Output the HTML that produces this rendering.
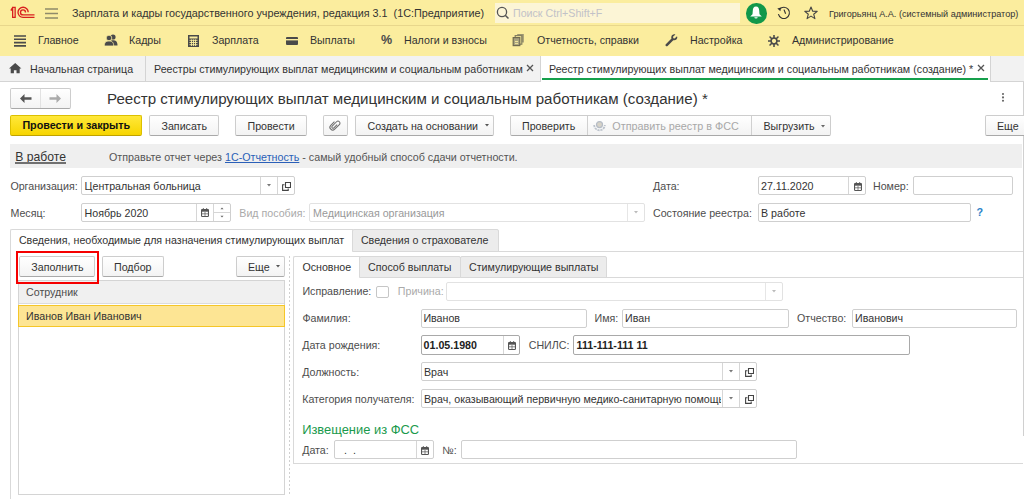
<!DOCTYPE html><html><head><meta charset="utf-8"><style>
html,body{margin:0;padding:0;width:1024px;height:499px;overflow:hidden;background:#fff;position:relative;font-family:"Liberation Sans",sans-serif}
div{position:absolute;box-sizing:border-box}
svg{display:block}
.t{white-space:nowrap;line-height:normal}
</style></head><body>
<div style="left:0px;top:0px;width:1024px;height:25px;background:#fbed9e"></div>
<div style="left:0px;top:25px;width:1024px;height:1px;background:#e8d78c"></div>
<div style="left:0px;top:26px;width:1024px;height:30px;background:#fbed9e"></div>
<svg style="position:absolute;left:0px;top:0px;" width="40" height="23" viewBox="0 0 40 23"><path d="M12.65 17.35V7.45H15.15V17.35ZM12.65 7.5L11.25 9.6V10.1H12.65" fill="none" stroke="#d9201f" stroke-width="1.3" stroke-linejoin="miter"/><path d="M28.2 12.3A5.1 5.1 0 1 0 23 17.4H34.5" fill="none" stroke="#d9201f" stroke-width="1.35"/><path d="M25.5 12.4A2.5 2.5 0 1 0 23 14.9H34.5" fill="none" stroke="#d9201f" stroke-width="1.35"/></svg>
<svg style="position:absolute;left:45px;top:8px;" width="13" height="11" viewBox="0 0 13 11"><path d="M0 1H13M0 5.5H13M0 10H13" stroke="#8f8a6a" stroke-width="1.4"/></svg>
<div class="t" style="left:72px;top:7.23px;font-size:10.8px;color:#333;font-weight:normal;">Зарплата и кадры государственного учреждения, редакция 3.1&nbsp; (1С:Предприятие)</div>
<div style="left:495px;top:3px;width:245px;height:20px;background:#fcf5d6"></div>
<svg style="position:absolute;left:496px;top:6px;" width="14" height="14" viewBox="0 0 14 14"><circle cx="6" cy="6" r="4.6" fill="none" stroke="#555" stroke-width="1.3"/><path d="M9.2 9.2L12.5 12.5" stroke="#555" stroke-width="1.5"/></svg>
<div class="t" style="left:513px;top:7.34px;font-size:10.67px;color:#c2c2c8;font-weight:normal;">Поиск Ctrl+Shift+F</div>
<div style="left:746px;top:3px;width:20.5px;height:20.5px;background:#11984a;border-radius:50%"></div>
<svg style="position:absolute;left:749px;top:5px;" width="14" height="16" viewBox="0 0 14 16"><path d="M7 1.5C4.6 1.5 3.9 3.6 3.8 5.6L3.5 9.2L1.2 11.4H12.8L10.5 9.2L10.2 5.6C10.1 3.6 9.4 1.5 7 1.5Z" fill="#fff"/><path d="M5.3 12.2H8.7A1.7 1.4 0 0 1 5.3 12.2Z" fill="#fff"/></svg>
<svg style="position:absolute;left:776px;top:5px;" width="16" height="15" viewBox="0 0 16 15"><path d="M3.6 4.2A5.6 5.6 0 1 1 2.4 9.2" fill="none" stroke="#333" stroke-width="1.15"/><path d="M1.3 3.6L4.9 2.6L4.4 6.2Z" fill="#333"/><path d="M8 4.6L9.6 8.8" fill="none" stroke="#333" stroke-width="1.15"/></svg>
<svg style="position:absolute;left:804px;top:6px;" width="14" height="14" viewBox="0 0 14 14"><path d="M7 1L8.7 5.2L13.2 5.4L9.7 8.2L10.9 12.6L7 10.1L3.1 12.6L4.3 8.2L0.8 5.4L5.3 5.2Z" fill="none" stroke="#444" stroke-width="1.1" stroke-linejoin="round"/></svg>
<div class="t" style="left:829px;top:8.76px;font-size:9.1px;color:#333;font-weight:normal;">Григорьянц А.А. (системный администратор)</div>
<div class="t" style="left:38px;top:34.34px;font-size:10.67px;color:#333;font-weight:normal;">Главное</div>
<div class="t" style="left:129px;top:34.34px;font-size:10.67px;color:#333;font-weight:normal;">Кадры</div>
<div class="t" style="left:212px;top:34.34px;font-size:10.67px;color:#333;font-weight:normal;">Зарплата</div>
<div class="t" style="left:310px;top:34.34px;font-size:10.67px;color:#333;font-weight:normal;">Выплаты</div>
<div class="t" style="left:404px;top:34.34px;font-size:10.67px;color:#333;font-weight:normal;">Налоги и взносы</div>
<div class="t" style="left:537px;top:34.34px;font-size:10.67px;color:#333;font-weight:normal;">Отчетность, справки</div>
<div class="t" style="left:690px;top:34.34px;font-size:10.67px;color:#333;font-weight:normal;">Настройка</div>
<div class="t" style="left:792px;top:34.34px;font-size:10.67px;color:#333;font-weight:normal;">Администрирование</div>
<svg style="position:absolute;left:14px;top:35px;" width="12" height="12" viewBox="0 0 12 12"><path d="M0 1H12M0 4.3H12M0 7.6H12M0 10.9H12" stroke="#4a4a4a" stroke-width="1.6"/></svg>
<svg style="position:absolute;left:104px;top:34px;" width="14" height="12" viewBox="0 0 14 12"><circle cx="9" cy="3" r="2.6" fill="#4a4a4a"/><path d="M5 11.5C5 7.5 6.5 6.3 9 6.3S13.5 7.5 13.5 11.5Z" fill="#4a4a4a"/><circle cx="5" cy="4" r="2.8" fill="#4a4a4a" stroke="#fbed9e" stroke-width="0.8"/><path d="M0.3 12C0.3 8.3 2 7 5 7S9.7 8.3 9.7 12Z" fill="#4a4a4a" stroke="#fbed9e" stroke-width="0.8"/></svg>
<svg style="position:absolute;left:188px;top:35px;" width="11" height="12" viewBox="0 0 11 12"><rect x="0" y="0" width="11" height="12" fill="#4a4a4a"/><rect x="1.5" y="1.5" width="8" height="2" fill="#fbed9e"/><path d="M1.5 5.3H9.5M1.5 7.5H9.5M1.5 9.7H9.5" stroke="#fbed9e" stroke-width="0.9"/><path d="M3.5 4.5V11M5.5 4.5V11M7.5 4.5V11" stroke="#fbed9e" stroke-width="0.9"/></svg>
<svg style="position:absolute;left:286px;top:37px;" width="12" height="8" viewBox="0 0 12 8"><rect x="0" y="0" width="12" height="8" rx="1" fill="#4a4a4a"/><rect x="0" y="2" width="12" height="1.4" fill="#fbed9e"/></svg>
<div class="t" style="left:381px;top:33.19px;font-size:12.5px;color:#4a4a4a;font-weight:bold;">%</div>
<svg style="position:absolute;left:512px;top:33px;" width="13" height="14" viewBox="0 0 13 14"><rect x="5.2" y="1" width="6.6" height="8.5" fill="#9b9570"/><rect x="3.2" y="2.6" width="6.6" height="8.6" fill="#fbed9e" stroke="#858060" stroke-width="1.2"/><rect x="1.2" y="4.6" width="6.6" height="8" fill="#a9a380" stroke="#6f6a50" stroke-width="1.2"/><path d="M3 8.5H6M3 10.6H6" stroke="#fbed9e" stroke-width="0.9"/></svg>
<svg style="position:absolute;left:665px;top:34px;" width="13" height="13" viewBox="0 0 13 13"><path d="M12 2.3L9.6 4.6L8.3 4.2L8 2.8L10.4 0.5C8.6 -0.2 6.5 0.9 6.3 3C6.2 3.6 6.3 4 6.5 4.5L0.8 10.2C0.2 10.8 0.4 11.9 1.2 12.2C1.7 12.4 2.2 12.2 2.6 11.9L8.3 6.2C10.6 7 13.2 4.9 12 2.3Z" fill="#4a4a4a"/></svg>
<svg style="position:absolute;left:768.4px;top:34.5px;" width="12" height="12" viewBox="0 0 12 12"><circle cx="6" cy="6" r="2.9" fill="none" stroke="#4a4a4a" stroke-width="1.5"/><path d="M9.20 6.00L11.60 6.00M8.26 8.26L9.96 9.96M6.00 9.20L6.00 11.60M3.74 8.26L2.04 9.96M2.80 6.00L0.40 6.00M3.74 3.74L2.04 2.04M6.00 2.80L6.00 0.40M8.26 3.74L9.96 2.04" stroke="#4a4a4a" stroke-width="1.6" stroke-linecap="round"/></svg>
<div style="left:0px;top:56px;width:1024px;height:25px;background:#f2f2f2"></div>
<div style="left:0px;top:81px;width:1024px;height:1px;background:#d4d4d4"></div>
<svg style="position:absolute;left:9px;top:62.6px;" width="13" height="11" viewBox="0 0 13 11"><path d="M6.2 0L12.4 5.6H10.7V10.3H7.5V7.2H4.9V10.3H1.7V5.6H0Z" fill="#4a4a4a"/></svg>
<div class="t" style="left:30px;top:62.84px;font-size:10.67px;color:#333;font-weight:normal;">Начальная страница</div>
<div style="left:145px;top:56px;width:1px;height:25px;background:#d4d4d4"></div>
<div class="t" style="left:154px;top:62.84px;font-size:10.67px;color:#333;font-weight:normal;">Реестры стимулирующих выплат медицинским и социальным работникам</div>
<svg style="position:absolute;left:526px;top:64px;" width="8" height="8" viewBox="0 0 8 8"><path d="M1 1L7 7M7 1L1 7" stroke="#555" stroke-width="1.3"/></svg>
<div style="left:540px;top:56px;width:1px;height:25px;background:#d4d4d4"></div>
<div style="left:541px;top:56px;width:449px;height:26px;background:#fff"></div>
<div class="t" style="left:549px;top:62.84px;font-size:10.67px;color:#333;font-weight:normal;">Реестр стимулирующих выплат медицинским и социальным работникам (создание) *</div>
<svg style="position:absolute;left:977px;top:64px;" width="8" height="8" viewBox="0 0 8 8"><path d="M1 1L7 7M7 1L1 7" stroke="#555" stroke-width="1.3"/></svg>
<div style="left:542px;top:78px;width:446px;height:2px;background:#16a04c"></div>
<div style="left:990px;top:56px;width:1px;height:25px;background:#d4d4d4"></div>
<div style="left:1023px;top:82px;width:1px;height:354px;background:#d0d0d0"></div>
<div style="left:10px;top:88px;width:61px;height:21px;background:linear-gradient(#ffffff,#f3f3f3);border:1px solid #cdcdcd;border-bottom-color:#a9a9a9;border-radius:2px;"></div>
<div style="left:40px;top:89px;width:1px;height:19px;background:#e2e2e2"></div>
<svg style="position:absolute;left:20px;top:94px;" width="12" height="9" viewBox="0 0 12 9"><path d="M0 4.5L4.5 0V3.2H11.5V5.8H4.5V9Z" fill="#555"/></svg>
<svg style="position:absolute;left:49px;top:94px;" width="12" height="9" viewBox="0 0 12 9"><path d="M12 4.5L7.5 0V3.2H0.5V5.8H7.5V9Z" fill="#aaa"/></svg>
<div class="t" style="left:107px;top:89.73px;font-size:15.1px;color:#333;font-weight:normal;">Реестр стимулирующих выплат медицинским и социальным работникам (создание) *</div>
<svg style="position:absolute;left:1001px;top:92.3px;" width="4" height="13" viewBox="0 0 4 13"><circle cx="2" cy="2" r="1.05" fill="#666"/><circle cx="2" cy="5.4" r="1.05" fill="#666"/><circle cx="2" cy="8.8" r="1.05" fill="#666"/></svg>
<div style="left:10px;top:115px;width:132px;height:21px;background:linear-gradient(#ffe83a,#f7d500);border:1px solid #dcc000;border-bottom-color:#bfa200;border-radius:2px;"></div>
<div class="t" style="left:22.4px;top:119.07px;font-size:10.75px;color:#111;font-weight:bold;">Провести и закрыть</div>
<div style="left:149px;top:115px;width:70px;height:21px;background:linear-gradient(#ffffff,#f3f3f3);border:1px solid #cdcdcd;border-bottom-color:#a9a9a9;border-radius:2px;"></div>
<div class="t" style="left:161.5px;top:119.84px;font-size:10.67px;color:#333;font-weight:normal;">Записать</div>
<div style="left:235px;top:115px;width:72px;height:21px;background:linear-gradient(#ffffff,#f3f3f3);border:1px solid #cdcdcd;border-bottom-color:#a9a9a9;border-radius:2px;"></div>
<div class="t" style="left:247.5px;top:119.84px;font-size:10.67px;color:#333;font-weight:normal;">Провести</div>
<div style="left:323px;top:115px;width:25px;height:21px;background:linear-gradient(#ffffff,#f3f3f3);border:1px solid #cdcdcd;border-bottom-color:#a9a9a9;border-radius:2px;"></div>
<svg style="position:absolute;left:328px;top:118px;" width="14" height="14" viewBox="0 0 14 14"><g transform="rotate(45 7 7)"><path d="M4.2 5V10.2A2.8 2.8 0 0 0 9.8 10.2V3.6A2 2 0 0 0 5.8 3.6V9.8A1.2 1.2 0 0 0 8.2 9.8V5.2" fill="none" stroke="#6f6f6f" stroke-width="1.05"/></g></svg>
<div style="left:355px;top:115px;width:139px;height:21px;background:linear-gradient(#ffffff,#f3f3f3);border:1px solid #cdcdcd;border-bottom-color:#a9a9a9;border-radius:2px;"></div>
<div class="t" style="left:367.5px;top:119.84px;font-size:10.67px;color:#333;font-weight:normal;">Создать на основании</div>
<svg style="position:absolute;left:484.5px;top:124.3px;" width="4" height="3" viewBox="0 0 4 3"><path d="M0 0H4L2 2.4Z" fill="#555"/></svg>
<div style="left:510px;top:115px;width:321px;height:21px;background:linear-gradient(#ffffff,#f3f3f3);border:1px solid #cdcdcd;border-bottom-color:#a9a9a9;border-radius:2px;"></div>
<div style="left:587px;top:116px;width:1px;height:19px;background:#d0d0d0"></div>
<div style="left:751px;top:116px;width:1px;height:19px;background:#d0d0d0"></div>
<div class="t" style="left:522px;top:119.84px;font-size:10.67px;color:#333;font-weight:normal;">Проверить</div>
<svg style="position:absolute;left:593px;top:120px;" width="13" height="12" viewBox="0 0 13 12"><path d="M1.2 5A5.3 5.3 0 0 0 11.8 5" fill="none" stroke="#bcc3cc" stroke-width="1.8" stroke-dasharray="2.2 0.8"/><circle cx="6.5" cy="4.6" r="3" fill="#d7d3c8" stroke="#b5bcc6" stroke-width="1.2"/></svg>
<div class="t" style="left:612.3px;top:119.73px;font-size:10.8px;color:#a8a8a8;font-weight:normal;">Отправить реестр в ФСС</div>
<div class="t" style="left:763.5px;top:119.84px;font-size:10.67px;color:#333;font-weight:normal;">Выгрузить</div>
<svg style="position:absolute;left:821px;top:125.3px;" width="4" height="3" viewBox="0 0 4 3"><path d="M0 0H4L2 2.4Z" fill="#666"/></svg>
<div style="left:985px;top:115px;width:45px;height:21px;background:linear-gradient(#ffffff,#f3f3f3);border:1px solid #cdcdcd;border-bottom-color:#a9a9a9;border-radius:2px;"></div>
<div class="t" style="left:997px;top:119.84px;font-size:10.67px;color:#333;font-weight:normal;">Еще</div>
<div style="left:10px;top:144px;width:1012px;height:24px;background:#efefef"></div>
<div class="t" style="left:15.3px;top:149.86px;font-size:12.2px;color:#333;font-weight:normal;">В работе</div>
<div style="left:15px;top:162px;width:51px;height:2px;background:#707070"></div>
<div class="t" style="left:109px;top:150.59px;font-size:10.73px;color:#555;font-weight:normal;">Отправьте отчет через <span style="color:#2a5fb8;text-decoration:underline">1С-Отчетность</span> - самый удобный способ сдачи отчетности.</div>
<div class="t" style="left:10.4px;top:180.34px;font-size:10.67px;color:#4d4d4d;font-weight:normal;">Организация:</div>
<div style="left:81px;top:176px;width:214px;height:19px;background:#fff;border:1px solid #cfcfcf;border-radius:2px;"></div>
<div style="left:260px;top:177px;width:1px;height:17px;background:#d6d6d6"></div>
<div style="left:277px;top:177px;width:1px;height:17px;background:#d6d6d6"></div>
<div class="t" style="left:84.6px;top:180.34px;font-size:10.67px;color:#333;font-weight:normal;">Центральная больница</div>
<svg style="position:absolute;left:266.5px;top:184.3px;" width="4" height="3" viewBox="0 0 4 3"><path d="M0 0H4L2 2.4Z" fill="#777"/></svg>
<svg style="position:absolute;left:282px;top:182px;" width="9" height="9" viewBox="0 0 9 9"><path d="M3.5 0.5H8.5V5.5H3.5Z" fill="none" stroke="#444" stroke-width="1.1"/><path d="M2.5 2.8H0.6V8.4H6.2V6.5" fill="none" stroke="#444" stroke-width="1.1"/></svg>
<div class="t" style="left:10.4px;top:206.84px;font-size:10.67px;color:#4d4d4d;font-weight:normal;">Месяц:</div>
<div style="left:81px;top:203px;width:150px;height:19px;background:#fff;border:1px solid #cfcfcf;border-radius:2px;"></div>
<div style="left:196px;top:204px;width:1px;height:17px;background:#d6d6d6"></div>
<div style="left:213px;top:204px;width:1px;height:17px;background:#d6d6d6"></div>
<div class="t" style="left:84.6px;top:206.84px;font-size:10.67px;color:#333;font-weight:normal;">Ноябрь 2020</div>
<svg style="position:absolute;left:201px;top:207.5px;" width="8" height="9" viewBox="0 0 8 9"><rect x="0.55" y="1.55" width="6.9" height="6.9" rx="0.8" fill="none" stroke="#555" stroke-width="1.1"/><rect x="0.5" y="1.5" width="7" height="2.2" fill="#555"/><rect x="1.8" y="0.3" width="1.2" height="1.8" fill="#555"/><rect x="5" y="0.3" width="1.2" height="1.8" fill="#555"/><path d="M1 5.8H7M4 4V8" stroke="#555" stroke-width="0.7"/></svg>
<svg style="position:absolute;left:220px;top:206px;" width="4" height="13" viewBox="0 0 4 13"><path d="M0.5 3.3H3.5L2 1.5Z" fill="#666"/><path d="M0.5 9.7H3.5L2 11.5Z" fill="#666"/></svg>
<div style="left:214px;top:212px;width:16px;height:1px;background:#d6d6d6"></div>
<div class="t" style="left:239.3px;top:206.84px;font-size:10.67px;color:#aaa;font-weight:normal;">Вид пособия:</div>
<div style="left:309px;top:203px;width:336px;height:19px;background:#fff;border:1px solid #cfcfcf;border-radius:2px;border-color:#e2e2e2"></div>
<div style="left:627px;top:204px;width:1px;height:17px;background:#e6e6e6"></div>
<div class="t" style="left:313px;top:206.84px;font-size:10.67px;color:#999;font-weight:normal;">Медицинская организация</div>
<svg style="position:absolute;left:634px;top:211.3px;" width="4" height="3" viewBox="0 0 4 3"><path d="M0 0H4L2 2.4Z" fill="#bbb"/></svg>
<div class="t" style="left:653px;top:180.34px;font-size:10.67px;color:#4d4d4d;font-weight:normal;">Дата:</div>
<div style="left:758px;top:176px;width:108px;height:19px;background:#fff;border:1px solid #cfcfcf;border-radius:2px;"></div>
<div style="left:848px;top:177px;width:1px;height:17px;background:#d6d6d6"></div>
<div class="t" style="left:761px;top:180.34px;font-size:10.67px;color:#333;font-weight:normal;">27.11.2020</div>
<svg style="position:absolute;left:853.5px;top:181.5px;" width="8" height="9" viewBox="0 0 8 9"><rect x="0.55" y="1.55" width="6.9" height="6.9" rx="0.8" fill="none" stroke="#555" stroke-width="1.1"/><rect x="0.5" y="1.5" width="7" height="2.2" fill="#555"/><rect x="1.8" y="0.3" width="1.2" height="1.8" fill="#555"/><rect x="5" y="0.3" width="1.2" height="1.8" fill="#555"/><path d="M1 5.8H7M4 4V8" stroke="#555" stroke-width="0.7"/></svg>
<div class="t" style="left:873px;top:180.34px;font-size:10.67px;color:#4d4d4d;font-weight:normal;">Номер:</div>
<div style="left:913px;top:176px;width:100px;height:19px;background:#fff;border:1px solid #cfcfcf;border-radius:2px;"></div>
<div class="t" style="left:653px;top:206.84px;font-size:10.67px;color:#4d4d4d;font-weight:normal;">Состояние реестра:</div>
<div style="left:758px;top:203px;width:213px;height:19px;background:#fff;border:1px solid #cfcfcf;border-radius:2px;"></div>
<div class="t" style="left:761px;top:206.84px;font-size:10.67px;color:#333;font-weight:normal;">В работе</div>
<div class="t" style="left:976.6px;top:206.03px;font-size:10.8px;color:#2a82c8;font-weight:bold;">?</div>
<div style="left:10px;top:229px;width:343px;height:271px;border-left:1px solid #d9d9d9;border-top:1px solid #d9d9d9;border-top-left-radius:2px"></div>
<div style="left:352px;top:229px;width:147px;height:23px;background:#ececec;border:1px solid #d9d9d9;border-radius:2px 2px 0 0"></div>
<div style="left:498px;top:251px;width:525px;height:1px;background:#d9d9d9"></div>
<div class="t" style="left:18.9px;top:234.34px;font-size:10.67px;color:#333;font-weight:normal;">Сведения, необходимые для назначения стимулирующих выплат</div>
<div class="t" style="left:360.9px;top:234.34px;font-size:10.67px;color:#333;font-weight:normal;">Сведения о страхователе</div>
<div style="left:19px;top:256px;width:76px;height:21px;background:linear-gradient(#ffffff,#f3f3f3);border:1px solid #cdcdcd;border-bottom-color:#a9a9a9;border-radius:2px;"></div>
<div class="t" style="left:31.3px;top:260.54px;font-size:10.67px;color:#333;font-weight:normal;">Заполнить</div>
<div style="left:102px;top:256px;width:62px;height:21px;background:linear-gradient(#ffffff,#f3f3f3);border:1px solid #cdcdcd;border-bottom-color:#a9a9a9;border-radius:2px;"></div>
<div class="t" style="left:114px;top:260.54px;font-size:10.67px;color:#333;font-weight:normal;">Подбор</div>
<div style="left:236px;top:256px;width:49px;height:21px;background:linear-gradient(#ffffff,#f3f3f3);border:1px solid #cdcdcd;border-bottom-color:#a9a9a9;border-radius:2px;"></div>
<div class="t" style="left:248px;top:260.54px;font-size:10.67px;color:#333;font-weight:normal;">Еще</div>
<svg style="position:absolute;left:275.5px;top:265.3px;" width="4" height="3" viewBox="0 0 4 3"><path d="M0 0H4L2 2.4Z" fill="#555"/></svg>
<div style="left:18px;top:280px;width:267px;height:215px;border:1px solid #d4d4d4"></div>
<div style="left:19px;top:281px;width:265px;height:23px;background:#f0f0f0;border-bottom:1px solid #dcdcdc"></div>
<div class="t" style="left:26px;top:286.04px;font-size:10.67px;color:#4d4d4d;font-weight:normal;">Сотрудник</div>
<div style="left:18px;top:305px;width:267px;height:22px;background:#fde594;border:1.6px solid #f5c628"></div>
<div class="t" style="left:26px;top:309.94px;font-size:10.67px;color:#333;font-weight:normal;">Иванов Иван Иванович</div>
<div style="left:289px;top:256px;width:1px;height:240px;background:repeating-linear-gradient(#d0d0d0 0 2px,transparent 2px 4px)"></div>
<div style="left:293px;top:256px;width:67px;height:208px;border-left:1px solid #d9d9d9;border-top:1px solid #d9d9d9;border-bottom:1px solid #d9d9d9;border-top-left-radius:2px"></div>
<div style="left:359px;top:256px;width:102px;height:22px;background:#ececec;border:1px solid #d9d9d9;border-radius:2px 2px 0 0"></div>
<div style="left:460px;top:256px;width:147px;height:22px;background:#ececec;border:1px solid #d9d9d9;border-radius:2px 2px 0 0"></div>
<div style="left:606px;top:277px;width:417px;height:1px;background:#d9d9d9"></div>
<div style="left:359px;top:463px;width:664px;height:1px;background:#d9d9d9"></div>
<div class="t" style="left:302.4px;top:260.64px;font-size:10.67px;color:#333;font-weight:normal;">Основное</div>
<div class="t" style="left:368px;top:260.64px;font-size:10.67px;color:#333;font-weight:normal;">Способ выплаты</div>
<div class="t" style="left:469px;top:260.64px;font-size:10.67px;color:#333;font-weight:normal;">Стимулирующие выплаты</div>
<div class="t" style="left:302.4px;top:284.74px;font-size:10.67px;color:#4d4d4d;font-weight:normal;">Исправление:</div>
<div style="left:376px;top:286px;width:13px;height:12px;border:1px solid #c6c6c6;border-radius:2px;background:#fff"></div>
<div class="t" style="left:397.8px;top:284.74px;font-size:10.67px;color:#aaa;font-weight:normal;">Причина:</div>
<div style="left:446px;top:282px;width:337px;height:19px;background:#fff;border:1px solid #cfcfcf;border-radius:2px;border-color:#e2e2e2"></div>
<div style="left:765px;top:283px;width:1px;height:17px;background:#e6e6e6"></div>
<svg style="position:absolute;left:772px;top:290.3px;" width="4" height="3" viewBox="0 0 4 3"><path d="M0 0H4L2 2.4Z" fill="#bbb"/></svg>
<div class="t" style="left:302.4px;top:311.94px;font-size:10.67px;color:#4d4d4d;font-weight:normal;">Фамилия:</div>
<div style="left:421px;top:309px;width:166px;height:19px;background:#fff;border:1px solid #cfcfcf;border-radius:2px;"></div>
<div class="t" style="left:423.4px;top:311.94px;font-size:10.67px;color:#333;font-weight:normal;">Иванов</div>
<div class="t" style="left:594.5px;top:311.94px;font-size:10.67px;color:#4d4d4d;font-weight:normal;">Имя:</div>
<div style="left:622px;top:309px;width:167px;height:19px;background:#fff;border:1px solid #cfcfcf;border-radius:2px;"></div>
<div class="t" style="left:625px;top:311.94px;font-size:10.67px;color:#333;font-weight:normal;">Иван</div>
<div class="t" style="left:797px;top:311.94px;font-size:10.67px;color:#4d4d4d;font-weight:normal;">Отчество:</div>
<div style="left:852px;top:309px;width:165px;height:19px;background:#fff;border:1px solid #cfcfcf;border-radius:2px;"></div>
<div class="t" style="left:855px;top:311.94px;font-size:10.67px;color:#333;font-weight:normal;">Иванович</div>
<div class="t" style="left:302.2px;top:339.09px;font-size:10.67px;color:#4d4d4d;font-weight:normal;">Дата рождения:</div>
<div style="left:421px;top:335px;width:99px;height:20px;background:#fff;border:1px solid #cfcfcf;border-radius:2px;border-color:#a9a9a9"></div>
<div style="left:503px;top:336px;width:1px;height:18px;background:#d6d6d6"></div>
<div class="t" style="left:423.6px;top:339.09px;font-size:10.67px;color:#222;font-weight:bold;">01.05.1980</div>
<svg style="position:absolute;left:508px;top:340.5px;" width="8" height="9" viewBox="0 0 8 9"><rect x="0.55" y="1.55" width="6.9" height="6.9" rx="0.8" fill="none" stroke="#555" stroke-width="1.1"/><rect x="0.5" y="1.5" width="7" height="2.2" fill="#555"/><rect x="1.8" y="0.3" width="1.2" height="1.8" fill="#555"/><rect x="5" y="0.3" width="1.2" height="1.8" fill="#555"/><path d="M1 5.8H7M4 4V8" stroke="#555" stroke-width="0.7"/></svg>
<div class="t" style="left:528.7px;top:339.09px;font-size:10.67px;color:#4d4d4d;font-weight:normal;">СНИЛС:</div>
<div style="left:573px;top:335px;width:337px;height:20px;background:#fff;border:1px solid #cfcfcf;border-radius:2px;border-color:#a9a9a9"></div>
<div class="t" style="left:576.6px;top:339.09px;font-size:10.67px;color:#222;font-weight:bold;">111-111-111 11</div>
<div class="t" style="left:302.2px;top:366.04px;font-size:10.67px;color:#4d4d4d;font-weight:normal;">Должность:</div>
<div style="left:421px;top:362px;width:336px;height:19px;background:#fff;border:1px solid #cfcfcf;border-radius:2px;"></div>
<div style="left:722px;top:363px;width:1px;height:17px;background:#d6d6d6"></div>
<div style="left:739px;top:363px;width:1px;height:17px;background:#d6d6d6"></div>
<div class="t" style="left:424px;top:366.04px;font-size:10.67px;color:#333;font-weight:normal;">Врач</div>
<svg style="position:absolute;left:728.5px;top:370.3px;" width="4" height="3" viewBox="0 0 4 3"><path d="M0 0H4L2 2.4Z" fill="#777"/></svg>
<svg style="position:absolute;left:745px;top:368px;" width="9" height="9" viewBox="0 0 9 9"><path d="M3.5 0.5H8.5V5.5H3.5Z" fill="none" stroke="#444" stroke-width="1.1"/><path d="M2.5 2.8H0.6V8.4H6.2V6.5" fill="none" stroke="#444" stroke-width="1.1"/></svg>
<div class="t" style="left:302.2px;top:392.54px;font-size:10.67px;color:#4d4d4d;font-weight:normal;">Категория получателя:</div>
<div style="left:421px;top:389px;width:336px;height:19px;background:#fff;border:1px solid #cfcfcf;border-radius:2px;"></div>
<div style="left:722px;top:390px;width:1px;height:17px;background:#d6d6d6"></div>
<div style="left:739px;top:390px;width:1px;height:17px;background:#d6d6d6"></div>
<div class="t" style="left:424px;top:392.54px;font-size:10.67px;color:#333;font-weight:normal;"><div style="position:static;width:297px;overflow:hidden">Врач, оказывающий первичную медико-санитарную помощь</div></div>
<svg style="position:absolute;left:728.5px;top:397.3px;" width="4" height="3" viewBox="0 0 4 3"><path d="M0 0H4L2 2.4Z" fill="#777"/></svg>
<svg style="position:absolute;left:745px;top:395px;" width="9" height="9" viewBox="0 0 9 9"><path d="M3.5 0.5H8.5V5.5H3.5Z" fill="none" stroke="#444" stroke-width="1.1"/><path d="M2.5 2.8H0.6V8.4H6.2V6.5" fill="none" stroke="#444" stroke-width="1.1"/></svg>
<div class="t" style="left:302.2px;top:421.73px;font-size:12.9px;color:#1a9a4c;font-weight:normal;">Извещение из ФСС</div>
<div class="t" style="left:302.2px;top:443.74px;font-size:10.67px;color:#4d4d4d;font-weight:normal;">Дата:</div>
<div style="left:334px;top:440px;width:100px;height:19px;background:#fff;border:1px solid #cfcfcf;border-radius:2px;"></div>
<div style="left:416px;top:441px;width:1px;height:17px;background:#d6d6d6"></div>
<div class="t" style="left:344px;top:443.74px;font-size:10.67px;color:#333;font-weight:normal;">.&nbsp; .</div>
<svg style="position:absolute;left:421px;top:445.5px;" width="8" height="9" viewBox="0 0 8 9"><rect x="0.55" y="1.55" width="6.9" height="6.9" rx="0.8" fill="none" stroke="#555" stroke-width="1.1"/><rect x="0.5" y="1.5" width="7" height="2.2" fill="#555"/><rect x="1.8" y="0.3" width="1.2" height="1.8" fill="#555"/><rect x="5" y="0.3" width="1.2" height="1.8" fill="#555"/><path d="M1 5.8H7M4 4V8" stroke="#555" stroke-width="0.7"/></svg>
<div class="t" style="left:442.3px;top:443.74px;font-size:10.67px;color:#4d4d4d;font-weight:normal;">№:</div>
<div style="left:461px;top:440px;width:336px;height:19px;background:#fff;border:1px solid #cfcfcf;border-radius:2px;"></div>
<div style="left:16px;top:251px;width:83px;height:33px;border:2.8px solid #f50000"></div>
</body></html>
